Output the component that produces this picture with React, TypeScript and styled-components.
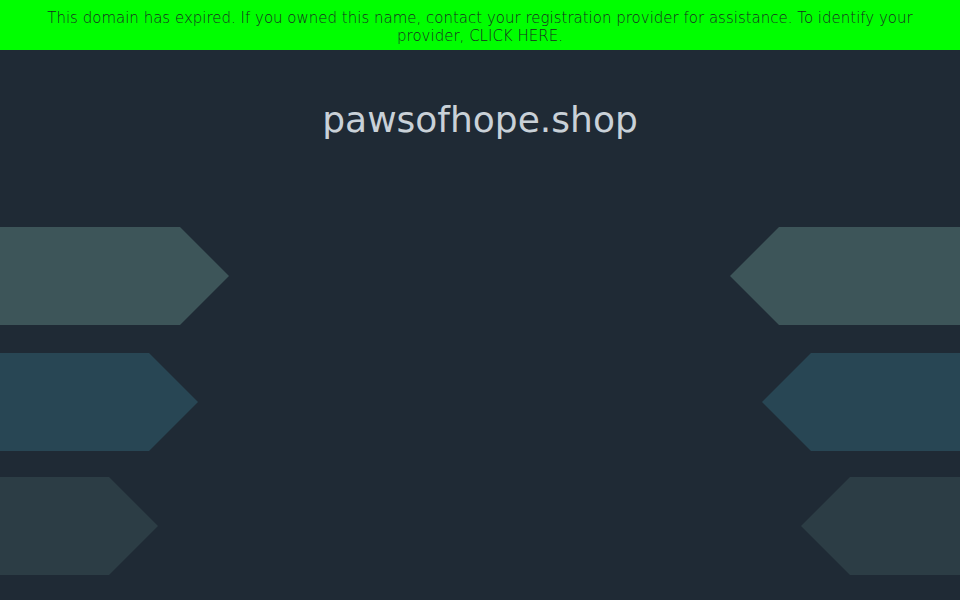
import styled, { createGlobalStyle } from "styled-components";

const GlobalStyle = createGlobalStyle`
  html, body {
    margin: 0;
    padding: 0;
    background: #1f2a35;
  }
  body {
    font-family: "DejaVu Sans", "Liberation Sans", sans-serif;
  }
`;

const Page = styled.div`
  width: 960px;
  height: 600px;
  overflow: hidden;
  background: #1f2a35;
  display: flex;
  flex-direction: column;
`;

const Banner = styled.div`
  height: 50px;
  box-sizing: border-box;
  padding: 9px 40px 0;
  background: #00ff00;
  color: #1b2a22;
  font-size: 15px;
  font-weight: 200;
  line-height: 18px;
  text-align: center;
  a {
    color: inherit;
    text-decoration: none;
  }
`;

const Title = styled.h1`
  margin: 48px 0 0;
  height: 44px;
  font-size: 36px;
  font-weight: normal;
  line-height: 44px;
  text-align: center;
  color: #c9d1d8;
`;

const Arrows = styled.div`
  margin-top: 85px;
  display: flex;
  flex-direction: column;
`;

const Row = styled.div<{ $gap: number }>`
  display: flex;
  justify-content: space-between;
  height: 98px;
  margin-bottom: ${(p) => p.$gap}px;
`;

const Arrow = styled.div<{ $w: number; $color: string; $side: "left" | "right" }>`
  width: ${(p) => p.$w}px;
  height: 100%;
  background: ${(p) => p.$color};
  clip-path: ${(p) =>
    p.$side === "left"
      ? "polygon(0 0, calc(100% - 49px) 0, 100% 50%, calc(100% - 49px) 100%, 0 100%)"
      : "polygon(49px 0, 100% 0, 100% 100%, 49px 100%, 0 50%)"};
`;

const rows = [
  { left: 229, right: 230, color: "#3d5559", gap: 28 },
  { left: 198, right: 198, color: "#284654", gap: 26 },
  { left: 158, right: 159, color: "#2c3d45", gap: 0 },
];

export default function App() {
  return (
    <Page>
      <GlobalStyle />
      <Banner>
        This domain has expired. If you owned this name, contact your registration provider for
        assistance. To identify your provider, <a href="#">CLICK HERE</a>.
      </Banner>
      <Title>pawsofhope.shop</Title>
      <Arrows>
        {rows.map((r, i) => (
          <Row key={i} $gap={r.gap}>
            <Arrow $w={r.left} $color={r.color} $side="left" />
            <Arrow $w={r.right} $color={r.color} $side="right" />
          </Row>
        ))}
      </Arrows>
    </Page>
  );
}
